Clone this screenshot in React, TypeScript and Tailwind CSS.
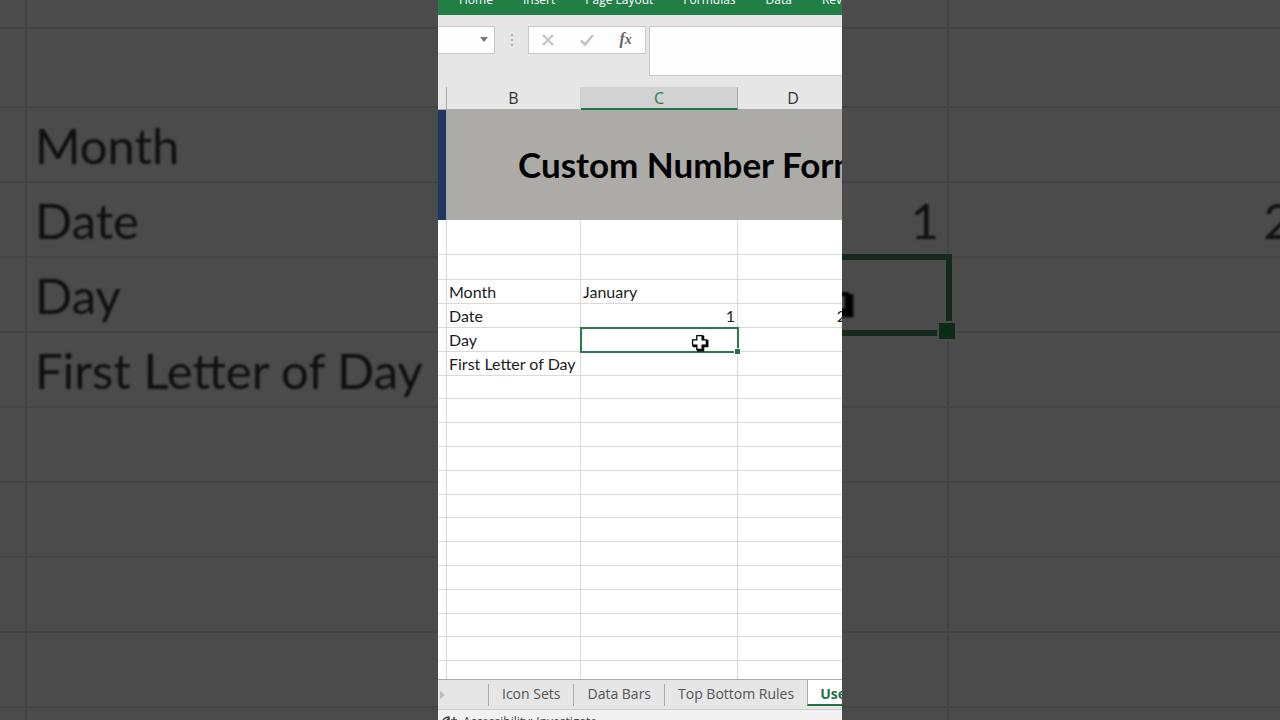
import type { ReactNode } from "react";
import clsx from "clsx";

const labels = ["Month", "Date", "Day", "First Letter of Day"];
const ribbonTabs = ["Home", "Insert", "Page Layout", "Formulas", "Data", "Review"];
const sheetTabs = ["Icon Sets", "Data Bars", "Top Bottom Rules"];

function CrossCursor({ className }: { className: string }) {
  return (
    <svg viewBox="0 0 17 17" className={className} aria-hidden="true">
      <path d="M6 2h6v4h4v6h-4v4H6v-4H2V6h4z" fill="#000" stroke="#000" />
      <path
        d="M5.500 1.500h5v4h4v5h-4v4h-5v-4h-4v-5h4z"
        fill="currentColor"
        stroke="#000"
        strokeWidth="1.200"
      />
    </svg>
  );
}

// Enlarged, dimmed copy of the sheet behind the video
function BackdropCell({ children, className }: { children?: ReactNode; className?: string }) {
  return (
    <td className={clsx("border-r-2 border-b-2 border-[#434343] px-2 py-0", className)}>
      {children && <span className="blur-[1px]">{children}</span>}
    </td>
  );
}

function Backdrop() {
  return (
    <div
      aria-hidden="true"
      className="col-start-1 row-start-1 overflow-hidden bg-[#4b4b4b] font-['Lato',sans-serif] text-[49px] leading-[60px] text-[#101010]"
    >
      <table className="w-[1302px] table-fixed border-separate border-spacing-0 whitespace-nowrap">
        <colgroup>
          <col className="w-[27px]" />
          <col className="w-[424px]" />
          <col className="w-[498px]" />
          <col />
        </colgroup>
        <tbody>
          {Array.from({ length: 11 }, (_, i) => (
            <tr key={i} className={i === 0 ? "h-[29px]" : i === 1 ? "h-[79px]" : "h-[75px]"}>
              <BackdropCell />
              <BackdropCell>{labels[i - 2]}</BackdropCell>
              {i === 4 ? (
                <td className="relative border-r-2 border-b-2 border-[#434343] p-0">
                  <div className="absolute -inset-1 -right-[5px] -bottom-[5px] border-[6px] border-[#15291c]" />
                  <div className="absolute -right-2.5 -bottom-2.5 size-5 border-2 border-[#4b4b4b] bg-[#0d2a19]" />
                  <CrossCursor className="absolute top-[18px] right-[92px] size-14 text-[#4b4b4b] blur-[1px]" />
                </td>
              ) : (
                <BackdropCell className="text-right">{i === 3 && "1"}</BackdropCell>
              )}
              <BackdropCell className="text-right">{i === 3 && "2"}</BackdropCell>
            </tr>
          ))}
        </tbody>
      </table>
    </div>
  );
}

function FormulaBar() {
  return (
    <div className="flex items-start py-[11px]">
      <div className="relative h-7 w-[57px]">
        <input
          aria-label="Name box"
          className="h-full w-full border border-l-0 border-[#c9c9c9] bg-[#fdfdfd]"
        />
        <svg viewBox="0 0 8 5" className="absolute top-[11px] right-[7px] h-[5px] w-2">
          <path d="M0 0h8L4 5z" fill="#777" />
        </svg>
      </div>
      <div className="flex h-7 w-[33px] flex-col items-center justify-center gap-[3px]">
        <i className="size-0.5 bg-[#b0b0b0]" />
        <i className="size-0.5 bg-[#b0b0b0]" />
        <i className="size-0.5 bg-[#b0b0b0]" />
      </div>
      <div className="flex h-7 w-[118px] items-center justify-around border border-[#c9c9c9] bg-[#fdfdfd]">
        <button aria-label="Cancel">
          <svg viewBox="0 0 14 14" className="size-3.5" fill="none" stroke="#c4c4c4" strokeWidth="2">
            <path d="M2 2l10 10M12 2L2 12" />
          </svg>
        </button>
        <button aria-label="Enter">
          <svg viewBox="0 0 14 14" className="size-3.5" fill="none" stroke="#c4c4c4" strokeWidth="2.600">
            <path d="M1 7.500l4 4L13 2" />
          </svg>
        </button>
        <button
          aria-label="Insert function"
          className="w-3.5 font-['Liberation_Serif',serif] text-base leading-4 font-bold text-[#666] italic"
        >
          f<span className="text-sm">x</span>
        </button>
      </div>
      <input
        aria-label="Formula"
        className="ml-[3px] h-[50px] min-w-0 flex-1 border border-r-0 border-[#c9c9c9] bg-[#fdfdfd]"
      />
    </div>
  );
}

function Sheet() {
  const cell = "border-r border-b border-[#d9d9d9] px-0.5 py-0";
  const head = "border-r border-b border-[#ababab] border-r-[#d0d0d0] p-0 font-normal";

  return (
    <div className="min-h-0 flex-1 overflow-hidden bg-white">
      <table className="w-[411px] table-fixed border-separate border-spacing-0 font-['Lato',sans-serif] text-base leading-5 whitespace-nowrap text-[#1c1c1c]">
        <colgroup>
          <col className="w-[9px]" />
          <col className="w-[134px]" />
          <col className="w-[157px]" />
          <col />
        </colgroup>
        <thead>
          <tr className="h-[23px] bg-[#e6e6e6] font-['Open_Sans',sans-serif] text-[#333]">
            <th className="border-r border-b border-[#ababab] p-0" />
            <th className={head}>B</th>
            <th className="border-r border-b-2 border-r-[#ababab] border-b-[#217346] bg-[#d2d2d2] p-0 font-normal text-[#2f7d52]">
              C
            </th>
            <th className={head}>D</th>
          </tr>
        </thead>
        <tbody>
          <tr className="h-[110px]">
            <td className="border-r border-[#acaba7] bg-[#203764] p-0" />
            <td colSpan={3} className="overflow-hidden bg-[#acaba7] pt-0 pr-0 pb-0.5 pl-[71px] text-[35px] leading-[44px] font-bold text-black">
              Custom Number Formatting
            </td>
          </tr>
          <tr className="h-[35px]">
            {[0, 1, 2, 3].map((n) => <td key={n} className={cell} />)}
          </tr>
          <tr className="h-[25px]">
            {[0, 1, 2, 3].map((n) => <td key={n} className={cell} />)}
          </tr>
          {Array.from({ length: 17 }, (_, i) => (
            <tr key={i} className={i % 5 === 4 ? "h-[23px]" : "h-6"}>
              <td className={cell} />
              <td className={cell}>{labels[i]}</td>
              {i === 2 ? (
                <td className={clsx(cell, "relative")}>
                  <div className="absolute -top-px -right-0.5 -bottom-0.5 -left-px border-2 border-[#2b7a4b]" />
                  <div className="absolute -right-1 -bottom-1 size-[7px] border border-white bg-[#217346]" />
                  <CrossCursor className="absolute top-1.5 right-7 size-[18px] text-white" />
                </td>
              ) : (
                <td className={clsx(cell, i === 1 && "text-right")}>
                  {i === 0 && "January"}
                  {i === 1 && "1"}
                </td>
              )}
              <td className={clsx(cell, "text-right")}>{i === 1 && "2"}</td>
            </tr>
          ))}
        </tbody>
      </table>
    </div>
  );
}

function SheetTabs() {
  return (
    <nav className="flex h-[31px] border-t border-b border-t-[#ababab] border-b-[#cfcfcf] text-sm whitespace-nowrap text-[#555]">
      <div className="flex w-[50px] shrink-0 items-center pl-0.5">
        <svg viewBox="0 0 5 8" className="h-2 w-[5px]">
          <path d="M0 0l5 4-5 4z" fill="#bbb" />
        </svg>
      </div>
      {sheetTabs.map((name) => (
        <div key={name} className="flex shrink-0 items-center">
          <span className="h-[22px] w-px bg-[#ababab]" />
          <button className="px-[13px] pb-0.5">{name}</button>
        </div>
      ))}
      <button className="mb-[3px] shrink-0 border-b-2 border-l border-b-[#217346] border-l-[#ababab] bg-white px-3 pt-1 font-bold text-[#217346]">
        User Defined
      </button>
    </nav>
  );
}

export default function App() {
  return (
    <main className="grid h-screen grid-cols-1 grid-rows-1 overflow-hidden">
      <Backdrop />
      <section className="z-10 col-start-1 row-start-1 flex h-full min-h-0 w-[404px] flex-col justify-self-center overflow-hidden bg-[#e6e6e6] font-['Open_Sans',sans-serif]">
        <nav className="flex h-[15px] shrink-0 items-end gap-[30px] overflow-hidden bg-[#217f46] pb-[7px] pl-[21px] text-xs leading-4 whitespace-nowrap text-white">
          {ribbonTabs.map((tab) => (
            <button key={tab}>{tab}</button>
          ))}
        </nav>
        <FormulaBar />
        <Sheet />
        <SheetTabs />
        <footer className="flex h-2.5 shrink-0 gap-1.5 overflow-hidden bg-[#f1f1f1] pt-1 pl-[3px] text-xs leading-4 text-[#444]">
          <svg viewBox="0 0 16 16" className="mt-px size-4 shrink-0" fill="none" stroke="#444" strokeWidth="1.500">
            <path d="M8 2C4 2 1 5 1 9M3 9l5-6v7M13 2v7M10 5h6" />
          </svg>
          Accessibility: Investigate
        </footer>
      </section>
    </main>
  );
}
